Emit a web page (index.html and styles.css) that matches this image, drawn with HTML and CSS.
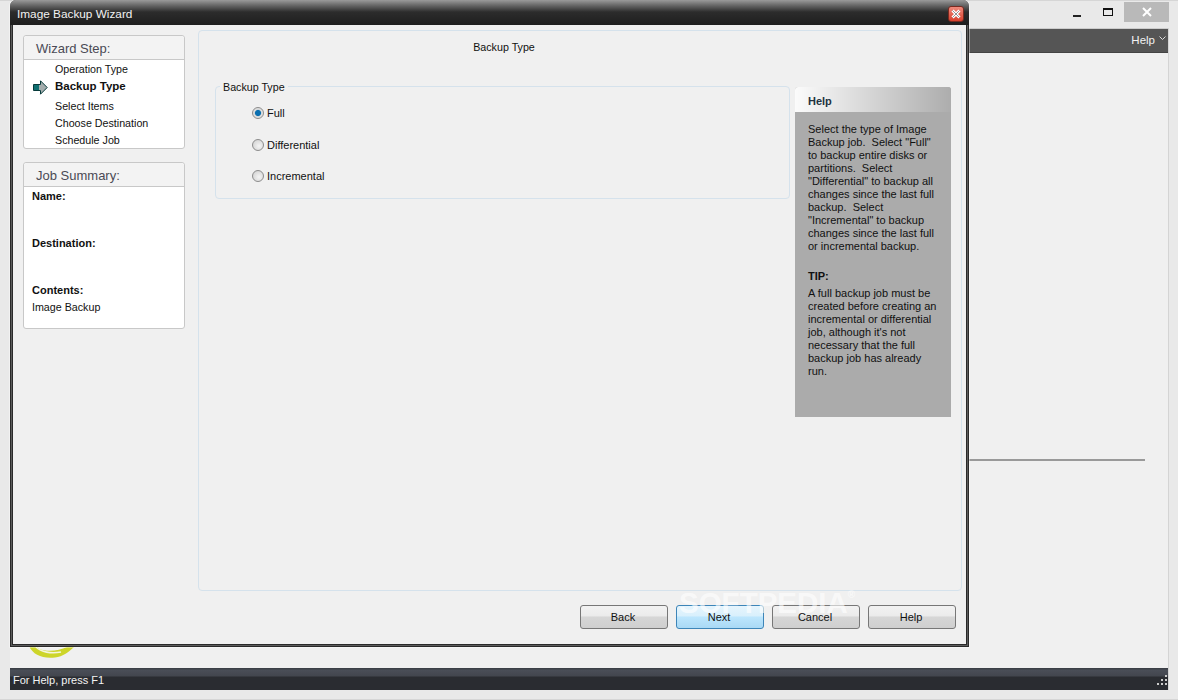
FILE: index.html
```html
<!DOCTYPE html>
<html lang="en">
<head>
<meta charset="utf-8">
<title>Image Backup Wizard</title>
<link rel="stylesheet" href="styles.css">
</head>
<body>
<div class="app">
  <div class="app-caption">
    <span class="cap-btn cap-min"><i></i></span>
    <span class="cap-btn cap-max"><i></i></span>
    <span class="cap-btn cap-close">
      <svg width="12" height="12" viewBox="0 0 12 12"><path d="M2 2 L10 10 M10 2 L2 10" stroke="#fff" stroke-width="2"/></svg>
    </span>
  </div>
  <div class="app-inner">
    <div class="app-menu"><span class="menu-help">Help</span><svg class="menu-arrow" width="7" height="5" viewBox="0 0 7 5"><path d="M0.5 0.5 L3.5 3.5 L6.5 0.5" fill="none" stroke="#ddd"/></svg></div>
    <div class="app-content">
      <div class="rule"></div>
    </div>
    <div class="app-status">
      <span>For Help, press F1</span>
      <svg class="grip" width="11" height="12" viewBox="0 0 11 12"><path d="M8 0h2v2H8zM4 4h2v2H4zM8 4h2v2H8zM0 8h2v2H0zM4 8h2v2H4zM8 8h2v2H8z" fill="#ccc"/></svg>
    </div>
  </div>
</div>

<svg class="logo-arc" width="60" height="14" viewBox="0 0 60 14">
  <path d="M0 0 C4 9 14 13 26 11.5 C34 10.5 40 6 45 1 L38 1 C30 5 18 6 10 3 L8 0 Z" fill="#cdd52a"/>
  <path d="M7 1 C12 6 22 8 32 6" fill="none" stroke="#f4f6dc" stroke-width="1.6"/>
</svg>

<div class="dialog">
  <div class="dlg-title">
    <span class="dlg-title-text">Image Backup Wizard</span>
    <span class="dlg-close">
      <svg width="12" height="10" viewBox="0 0 12 10"><path d="M2.5 1.5 L9.5 8.5 M9.5 1.5 L2.5 8.5" stroke="#fff" stroke-width="3"/><path d="M2.5 1.5 L9.5 8.5 M9.5 1.5 L2.5 8.5" stroke="#777" stroke-width="0.8"/></svg>
    </span>
  </div>
  <div class="dlg-body">
    <aside class="side">
      <section class="box box-steps">
        <h2 class="box-head">Wizard Step:</h2>
        <ul class="steps">
          <li class="step">Operation Type</li>
          <li class="step step-current">
            <svg class="step-arrow" width="15" height="15" viewBox="0 0 15 15"><path d="M0.5 4.5 H7.5 V0.8 L14.2 7.5 L7.5 14.2 V10.5 H0.5 Z" fill="#a4adad" stroke="#063a3a"/><path d="M1 5 H6 V10 H1 Z" fill="#0f6f70"/></svg>
            Backup Type
          </li>
          <li class="step step-after">Select Items</li>
          <li class="step">Choose Destination</li>
          <li class="step">Schedule Job</li>
        </ul>
      </section>
      <section class="box box-summary">
        <h2 class="box-head">Job Summary:</h2>
        <div class="summary">
          <div class="sum-label sum-name">Name:</div>
          <div class="sum-label sum-dest">Destination:</div>
          <div class="sum-label sum-cont">Contents:</div>
          <div class="sum-value">Image Backup</div>
        </div>
      </section>
    </aside>
    <main class="main">
      <div class="panel">
        <h1 class="panel-title">Backup Type</h1>
        <div class="panel-row">
          <fieldset class="group">
            <legend class="group-legend">Backup Type</legend>
            <label class="radio radio-first"><span class="dot dot-on"></span>Full</label>
            <label class="radio"><span class="dot"></span>Differential</label>
            <label class="radio"><span class="dot"></span>Incremental</label>
          </fieldset>
          <div class="help">
            <div class="help-head">Help</div>
            <div class="help-text">
              <p class="help-p">Select the type of Image<br>Backup job.&nbsp; Select "Full"<br>to backup entire disks or<br>partitions.&nbsp; Select<br>"Differential" to backup all<br>changes since the last full<br>backup.&nbsp; Select<br>"Incremental" to backup<br>changes since the last full<br>or incremental backup.</p>
              <p class="help-tip">TIP:</p>
              <p class="help-p">A full backup job must be<br>created before creating an<br>incremental or differential<br>job, although it's not<br>necessary that the full<br>backup job has already<br>run.</p>
            </div>
          </div>
        </div>
      </div>
      <div class="buttons">
        <button class="btn">Back</button>
        <button class="btn btn-default">Next</button>
        <button class="btn">Cancel</button>
        <button class="btn">Help</button>
      </div>
    </main>
  </div>
</div>
<div class="watermark">SOFTPEDIA<sup class="wm-r">®</sup></div>
</body>
</html>
```
FILE: styles.css
```css
* { box-sizing: border-box; }
html, body { margin: 0; padding: 0; height: 700px; overflow: hidden; }
body {
  background: #e9e9e9;
  font-family: "Liberation Sans", Arial, sans-serif;
  font-size: 11px;
  color: #111;
  position: relative;
}
.app {
  height: 700px;
  display: flex;
  flex-direction: column;
  padding: 1px 9px 9px 10px;
  border: 1px solid #d6d6d6;
  border-width: 1px 0 1px 0;
}
.app-caption {
  height: 26px;
  display: flex;
  justify-content: flex-end;
  align-items: flex-start;
}
.cap-btn { display: flex; align-items: center; justify-content: center; height: 20px; }
.cap-min { width: 28px; margin-right: 3px; }
.cap-min i { display: block; width: 8px; height: 2px; background: #222; margin-top: 8px; }
.cap-max { width: 28px; margin-right: 2px; }
.cap-max i { display: block; width: 10px; height: 8px; border: 1px solid #111; border-top-width: 2px; }
.cap-close { width: 45px; background: #b9b9b9; margin-right: 0; }
.app-inner {
  flex: 1;
  display: flex;
  flex-direction: column;
  border-right: 1px solid #d4d4d4;
}
.app-menu {
  height: 25px;
  background: #555;
  border-top: 1px solid #ccc;
  border-bottom: 1px solid #444;
  display: flex;
  align-items: center;
  justify-content: flex-end;
  padding-right: 2px;
  color: #f2f2f2;
}
.menu-help { margin: -2px 4px 0 0; font-size: 11.5px; }
.menu-arrow { margin-top: -4px; }
.app-content {
  flex: 1;
  background: #f0f0f0;
  padding: 406px 23px 0 0;
}
.rule { height: 2px; background: #999; }
.app-status {
  height: 22px;
  background: linear-gradient(#3c3f46 0, #3c4048 1px, #4a4e57 2px, #43464e 8px, #2a2c31 9px, #2a2c31 100%);
  color: #f4f4f4;
  padding: 5px 0 0 3px;
  position: relative;
  line-height: 15px;
  font-size: 11px;
}
.grip { position: absolute; right: 0; bottom: 3px; }
.logo-arc { position: absolute; left: 29px; top: 646px; }

.dialog {
  position: absolute;
  left: 10px;
  top: 0;
  width: 959px;
  height: 647px;
  background: #f0f0f0;
  border: 1px solid #2a2a2a;
  border-top: 0;
  padding: 0 2px 2px;
  border-radius: 6px 6px 0 0;
  box-shadow: inset 0 0 0 1px #5c5c5c, inset 0 0 0 2px #2a2a2a;
  display: flex;
  flex-direction: column;
  outline: 1px solid rgba(255,255,255,0.4);
}
.dlg-title {
  height: 25px;
  background: linear-gradient(#9a9a9a 0, #6a6a6a 5px, #2c2c2c 12px, #1e1e1e 100%);
  display: flex;
  align-items: center;
  justify-content: space-between;
  padding: 3px 5px 0 7px;
  color: #f2f2f2;
  font-size: 11.8px;
  margin: 0 -3px;
  border-radius: 6px 6px 0 0;
}
.dlg-close {
  width: 16px;
  height: 16px;
  background: linear-gradient(#ef8a7c, #d8402c);
  border: 1px solid #7a2a20;
  border-radius: 3px;
  display: flex;
  align-items: center;
  justify-content: center;
  margin-top: -1px;
}
.dlg-body { flex: 1; display: flex; padding: 5px 4px 0 10px; }
.side { flex: none; width: 162px; margin-right: 13px; padding-top: 5px; display: flex; flex-direction: column; gap: 13px; }
.box { background: #fff; border: 1px solid #c8c8c8; border-radius: 3px; }
.box-steps { height: 114px; }
.box-summary { height: 167px; }
.box-head {
  margin: 0;
  height: 24px;
  background: #f3f3f3;
  border-bottom: 1px solid #c8c8c8;
  font-weight: normal;
  font-size: 13px;
  color: #4a4a55;
  padding-left: 12px;
  line-height: 26px;
  border-radius: 3px 3px 0 0;
}
.steps { list-style: none; margin: 0; padding: 1px 0 0 31px; font-size: 10.7px; }
.step { height: 17px; line-height: 17px; position: relative; }
.step-current { font-weight: bold; height: 20px; line-height: 17px; font-size: 11.5px; }
.step-arrow { position: absolute; left: -22px; top: 2px; }
.summary { padding: 1px 8px 0; font-size: 10.7px; }
.sum-label { font-weight: bold; line-height: 17px; font-size: 11px; }
.sum-name { margin-bottom: 30px; }
.sum-dest { margin-bottom: 30px; }
.sum-value { line-height: 17px; }
.main { flex: none; width: 764px; display: flex; flex-direction: column; }
.panel {
  height: 561px;
  border: 1px solid #d5e2ec;
  border-radius: 4px;
  padding: 0 10px 0 16px;
}
.panel-title { margin: 0; height: 55px; font-size: 10.7px; font-weight: normal; text-align: center; line-height: 33px; padding-right: 158px; }
.panel-row { display: flex; align-items: flex-start; gap: 5px; }
.group {
  margin: 0;
  flex: none;
  width: 575px;
  height: 121px;
  border: 1px solid #d5e2ec;
  border-radius: 4px;
  padding: 0 0 0 36px;
  margin-top: -8px;
}
.group-legend { padding: 2px 3px 0; margin-left: -32px; font-size: 10.7px; line-height: 15px; }
.radio { display: flex; align-items: center; height: 32px; }
.radio-first { margin-top: 2px; }
.radio + .radio { height: 31px; }
.dot {
  width: 12px;
  height: 12px;
  border-radius: 50%;
  border: 1px solid #8c8c8c;
  background: radial-gradient(circle at 60% 60%, #f4f4f4, #cdcdcd);
  margin-right: 3px;
  flex: none;
}
.dot-on { background: radial-gradient(circle, #0a6fb0 0, #0a6fb0 2.6px, #dcdcdc 3.6px, #e6e6e6 100%); }
.help { flex: none; width: 156px; height: 330px; background: #ababab; border-radius: 3px 3px 0 0; margin-top: 1px; }
.help-head {
  height: 25px;
  background: linear-gradient(90deg, #fbfbfb, #adadad);
  font-weight: bold;
  color: #23333f;
  padding-left: 13px;
  line-height: 29px;
  border-radius: 3px 3px 0 0;
}
.help-text { padding: 11px 0 0 13px; line-height: 13px; }
.help-p { margin: 0; }
.help-tip { margin: 17px 0 4px; font-weight: bold; }
.buttons { display: flex; gap: 8px; padding: 14px 0 0 382px; }
.btn {
  width: 88px;
  height: 24px;
  font: inherit;
  color: #111;
  border: 1px solid #777;
  border-radius: 3px;
  background: linear-gradient(#f2f2f2 0, #ebebeb 45%, #d6d6d6 50%, #cfcfcf 100%);
  padding: 0 2px 0 0;
}
.btn-default {
  border-color: #3d85b8;
  background: linear-gradient(#e6f5fd 0, #d9f0fc 45%, #bde6fd 50%, #a9d9f5 100%);
}
.watermark {
  position: absolute;
  left: 679px;
  top: 585px;
  font-family: "Liberation Sans", sans-serif;
  font-weight: bold;
  font-size: 29.5px;
  line-height: 36px;
  color: rgba(255,255,255,0.6);
  pointer-events: none;
}
.wm-r { font-size: 10px; vertical-align: top; line-height: 20px; }
```
